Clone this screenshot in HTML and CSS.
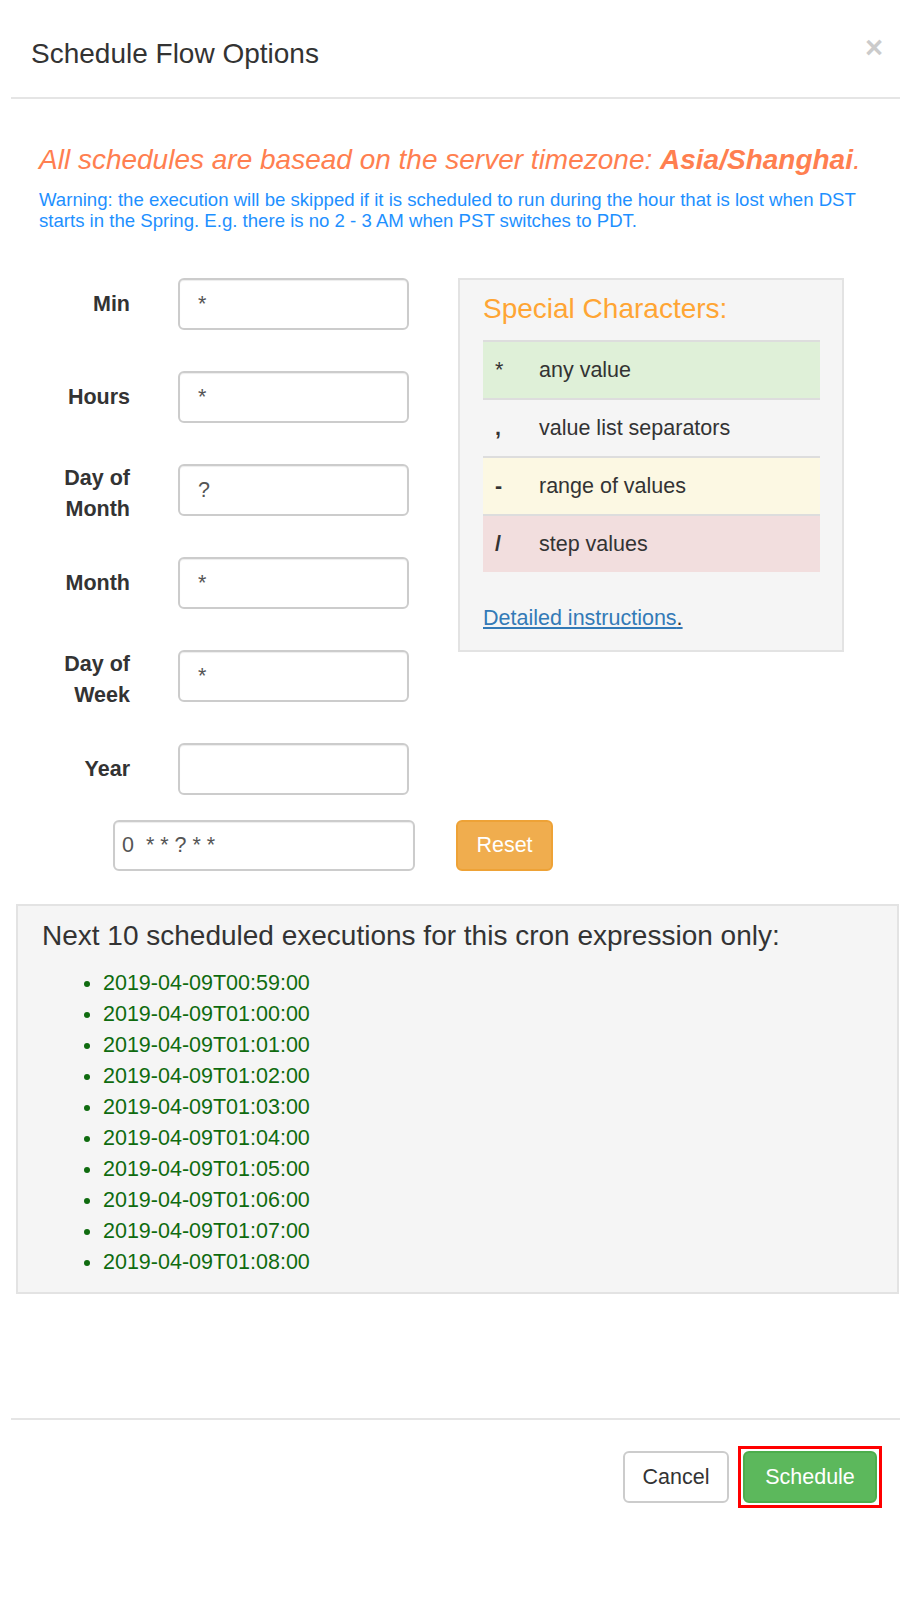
FILE: index.html
```html
<!DOCTYPE html>
<html lang="en">
<head>
    <meta charset="UTF-8">
    <meta name="viewport" content="width=device-width, initial-scale=1.0">
    <title>Schedule Flow Options</title>
    <link rel="stylesheet" href="styles.css">
</head>
<body>
    <div class="modal">
        <div class="modal-header">
            <h4 class="modal-title">Schedule Flow Options</h4>
            <button type="button" class="close">&times;</button>
        </div>

        <div class="modal-body">
            <h4 class="tz-note">All schedules are basead on the server timezone: <b>Asia/Shanghai</b>.</h4>
            <p class="dst-warning">Warning: the execution will be skipped if it is scheduled to run during the hour that is lost when DST starts in the Spring. E.g. there is no 2 - 3 AM when PST switches to PDT.</p>

            <div class="cron-layout">
                <form class="cron-fields" id="cronForm">
                    <label for="minute">Min</label>
                    <input type="text" id="minute" value="*">

                    <label for="hour">Hours</label>
                    <input type="text" id="hour" value="*">

                    <label for="dom" class="two-line">Day of<br>Month</label>
                    <input type="text" id="dom" value="?">

                    <label for="month">Month</label>
                    <input type="text" id="month" value="*">

                    <label for="dow" class="two-line">Day of<br>Week</label>
                    <input type="text" id="dow" value="*">

                    <label for="year">Year</label>
                    <input type="text" id="year" value="">
                </form>

                <div class="special-chars">
                    <h3>Special Characters:</h3>
                    <table>
                        <tr class="success"><td>*</td><td>any value</td></tr>
                        <tr><td><b>,</b></td><td>value list separators</td></tr>
                        <tr class="warning"><td><b>-</b></td><td>range of values</td></tr>
                        <tr class="danger"><td><b>/</b></td><td>step values</td></tr>
                    </table>
                    <p class="more"><a href="#">Detailed instructions</a><span>.</span></p>
                </div>
            </div>

            <div class="cron-output">
                <input type="text" id="cronExpr" value="0  * * ? * *">
                <button type="button" class="btn btn-warning" id="resetBtn">Reset</button>
            </div>

            <div class="next-runs">
                <h3>Next 10 scheduled executions for this cron expression only:</h3>
                <ul id="runList">
                    <li>2019-04-09T00:59:00</li>
                    <li>2019-04-09T01:00:00</li>
                    <li>2019-04-09T01:01:00</li>
                    <li>2019-04-09T01:02:00</li>
                    <li>2019-04-09T01:03:00</li>
                    <li>2019-04-09T01:04:00</li>
                    <li>2019-04-09T01:05:00</li>
                    <li>2019-04-09T01:06:00</li>
                    <li>2019-04-09T01:07:00</li>
                    <li>2019-04-09T01:08:00</li>
                </ul>
            </div>
        </div>

        <div class="modal-footer">
            <button type="button" class="btn btn-default">Cancel</button>
            <span class="highlight">
                <button type="button" class="btn btn-success">Schedule</button>
            </span>
        </div>
    </div>
</body>
</html>
```

FILE: styles.css
```css
body {
    font-family: "Liberation Sans", Arial, Helvetica, sans-serif;
    font-size: 21.5px;
    line-height: 31px;
    color: #333;
    background: #fff;
    margin: 0;
    padding: 0;
}

.modal {
    margin: 12px 5px 0 11px;
    background: #fff;
}

.modal-header {
    display: flex;
    justify-content: space-between;
    align-items: flex-start;
    padding: 22px 17px 23px 20px;
    border-bottom: 2px solid #e5e5e5;
}

.modal-title {
    margin: 0;
    font-size: 28px;
    font-weight: normal;
    line-height: 40px;
    color: #333;
}

.close {
    background: none;
    border: none;
    padding: 0;
    margin-top: -6px;
    font-family: inherit;
    font-size: 31px;
    font-weight: bold;
    line-height: 40px;
    color: #000;
    opacity: 0.2;
    cursor: pointer;
}

.modal-body {
    padding: 0 22px;
}

.tz-note {
    margin: 45px 0 0 6px;
    font-size: 28px;
    font-style: italic;
    font-weight: normal;
    line-height: 32px;
    color: #ff7f50;
}

.dst-warning {
    margin: 14px 0 0 6px;
    font-size: 18.6px;
    line-height: 20.5px;
    color: #1e90ff;
}

.cron-layout {
    display: flex;
    align-items: flex-start;
    gap: 49px;
    margin-top: 47px;
}

.cron-fields {
    display: grid;
    grid-template-columns: 97px 231px;
    grid-auto-rows: 52px;
    column-gap: 48px;
    row-gap: 41px;
    align-items: center;
}

.cron-fields label {
    font-weight: bold;
    text-align: right;
}

.cron-fields .two-line {
    padding-top: 8px;
}

input[type="text"] {
    box-sizing: border-box;
    height: 52px;
    padding: 0 18px;
    font-family: inherit;
    font-size: 21.5px;
    color: #555;
    background: #fff;
    border: 2px solid #ccc;
    border-radius: 6px;
    box-shadow: inset 0 1px 1px rgba(0, 0, 0, 0.075);
}

.special-chars {
    width: 386px;
    box-sizing: border-box;
    padding: 10px 23px 16px;
    background: #f5f5f5;
    border: 2px solid #e3e3e3;
}

.special-chars h3 {
    margin: 0 0 12px;
    font-size: 28px;
    font-weight: normal;
    line-height: 38px;
    color: #ffa534;
}

.special-chars table {
    width: 337px;
    border-collapse: collapse;
}

.special-chars td {
    height: 56px;
    padding: 0 12px;
    border-top: 2px solid #ddd;
    vertical-align: middle;
}

.special-chars td:first-child {
    width: 20px;
}

.success td { background: #dff0d8; }
.warning td { background: #fcf8e3; }
.danger td { background: #f2dede; }

.special-chars .more {
    margin: 31px 0 0;
    text-decoration: underline;
    text-decoration-color: #337ab7;
}

.special-chars a {
    color: #337ab7;
}

.cron-output {
    display: flex;
    align-items: center;
    gap: 41px;
    margin: 25px 0 0 80px;
}

#cronExpr {
    width: 302px;
    height: 51px;
    padding: 0 7px;
}

.btn {
    box-sizing: border-box;
    height: 52px;
    padding: 0;
    font-family: inherit;
    font-size: 21.5px;
    text-align: center;
    border: 2px solid transparent;
    border-radius: 6px;
    cursor: pointer;
}

.btn-warning {
    width: 97px;
    height: 51px;
    color: #fff;
    background: #f0ad4e;
    border-color: #eea236;
}

.next-runs {
    margin: 33px -21px 0 -17px;
    height: 390px;
    box-sizing: border-box;
    padding: 10px 24px;
    background: #f5f5f5;
    border: 2px solid #e3e3e3;
}

.next-runs h3 {
    margin: 0 0 12px;
    font-size: 28px;
    font-weight: normal;
    line-height: 40px;
    color: #333;
}

.next-runs ul {
    margin: 0;
    padding-left: 61px;
    color: #0f6b0f;
}

.modal-footer {
    display: flex;
    justify-content: flex-end;
    align-items: center;
    gap: 9px;
    margin-top: 124px;
    padding: 26px 18px 22px;
    border-top: 2px solid #e5e5e5;
}

.btn-default {
    width: 106px;
    color: #333;
    background: #fff;
    border-color: #ccc;
}

.btn-success {
    display: block;
    width: 134px;
    color: #fff;
    background: #5cb85c;
    border-color: #4cae4c;
}

/* red frame around the primary action */
.highlight {
    display: block;
    padding: 2px;
    border: 3px solid #f00;
}
```
